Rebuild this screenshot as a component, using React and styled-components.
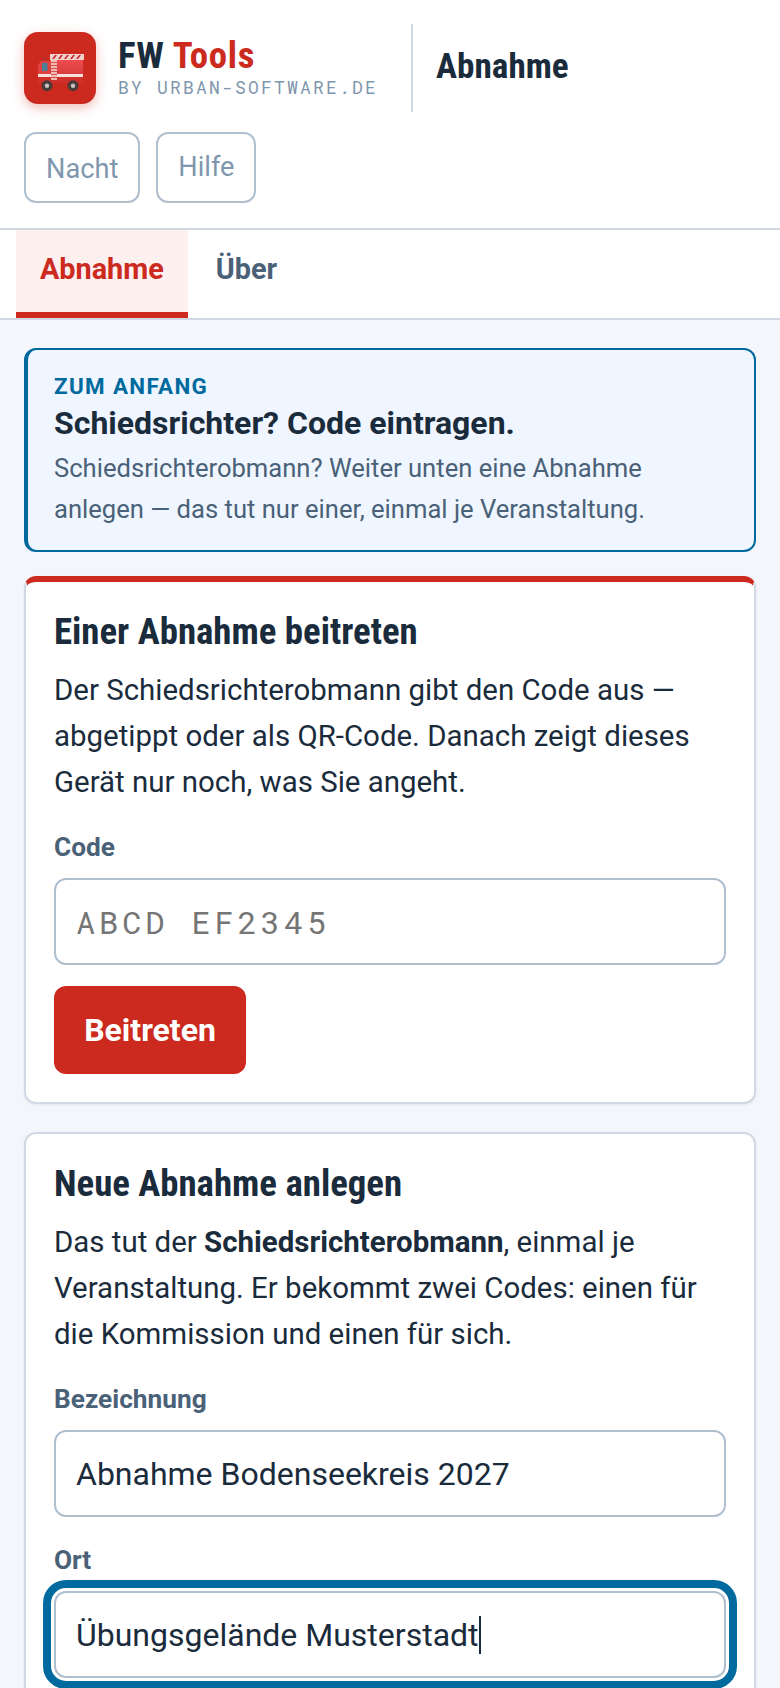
import React from "react";
import styled, { createGlobalStyle } from "styled-components";

const Global = createGlobalStyle`
  * { box-sizing: border-box; }
  html, body { margin: 0; padding: 0; background: #f4f6fb; }
  body { font-family: Roboto, "Liberation Sans", sans-serif; color: #1a2b3c; overflow: hidden; height: 1688px; }
`;
const Page = styled.div`width: 780px; height: 1688px; overflow: hidden;`;
const Header = styled.header`
  background: #fff; border-bottom: 2px solid #d2d9e3; padding: 24px 24px 0; height: 230px;
  display: flex; flex-direction: column; gap: 20px;
`;
const BrandRow = styled.div`display: flex; align-items: center; height: 88px;`;
const LogoBox = styled.div`
  width: 72px; height: 72px; border-radius: 14px; background: #cc2a1e; flex: none;
  box-shadow: 0 4px 12px rgba(204,42,30,.3); display: flex;
`;
const Brand = styled.div`margin-left: 22px; display: flex; flex-direction: column; padding: 0 33px 3px 0; border-right: 2px solid #d2d9e3; height: 88px; justify-content: center;`;
const BrandTitle = styled.div`font-family: "Roboto Condensed", Roboto, sans-serif; font-stretch: condensed; font-weight: 700; font-size: 36.8px; line-height: 40px; letter-spacing: .74px; color: #1a2b3c; span { color: #cc2a1e; }`;
const BrandSub = styled.div`font-family: "Roboto Mono", "DejaVu Sans Mono", monospace; font-size: 18px; line-height: 22px; letter-spacing: 2.2px; color: #7f97ae;`;
const PageTitle = styled.div`margin: 0 0 4px 23px; font-family: "Roboto Condensed", Roboto, sans-serif; font-stretch: condensed; font-weight: 700; font-size: 35.2px; color: #1a2b3c;`;
const ToolRow = styled.div`display: flex; gap: 16px;`;
const ToolButton = styled.div`
  height: 71px; padding: ${p => p.$up ? "0 20px 1px" : "2px 20px 0"}; border: 2px solid #b0bfce; border-radius: 12px; color: #7f97ae; font-size: 27.2px;
  display: flex; align-items: center; background: #fff;
`;
const Tabs = styled.nav`background: #fff; border-bottom: 2px solid #d2d9e3; height: 90px; padding: 0 16px; display: flex; gap: 4px;`;
const Tab = styled.div`
  padding: 0 24px 4px; height: 88px; display: flex; align-items: center; font-weight: 700; font-size: 28.8px;
  color: ${p => p.$active ? "#cc2a1e" : "#4a6178"};
  background: ${p => p.$active ? "#fdf0ef" : "transparent"};
  border-bottom: 6px solid ${p => p.$active ? "#cc2a1e" : "transparent"};
`;
const Main = styled.main`padding: 28px 24px 0;`;
const Callout = styled.section`
  background: #eff6ff; border: 2px solid #006a9e; border-left-width: 4px; border-radius: 12px; padding: 23px 26px 0; height: 204px; margin-bottom: 24px;
`;
const Eyebrow = styled.div`font-weight: 700; font-size: 22.4px; line-height: 26px; letter-spacing: 1.34px; color: #006a9e;`;
const CalloutTitle = styled.div`margin-top: 4px; font-weight: 700; font-size: 32px; line-height: 40px; color: #1a2b3c;`;
const CalloutText = styled.p`margin: 5px 0 0; font-size: 25.6px; line-height: 40.7px; color: #4a6178;`;
const Card = styled.section`
  background: #fff; border: 2px solid #d2d9e3; ${p => p.$accent ? "border-top: 6px solid #cc2a1e;" : ""} border-radius: 12px;
  padding: 28px 28px 28px; margin-bottom: 28px; box-shadow: 0 1px 3px rgba(26,43,60,.08);
`;
const CardTitle = styled.h2`margin: 0; font-family: "Roboto Condensed", Roboto, sans-serif; font-stretch: condensed; font-weight: 700; font-size: 36.8px; line-height: 44px; color: #1a2b3c;`;
const CardText = styled.p`margin: 13px 0 0; font-size: 29.44px; line-height: 46px; color: #1a2b3c; b { font-weight: 700; }`;
const Label = styled.div`margin-top: ${p => p.$mt}px; font-weight: 700; font-size: 26.24px; line-height: 32px; color: #4a6178;`;
const Field = styled.div`
  margin-top: 15px; height: 87px; border: 2px solid #b0bfce; border-radius: 12px; background: #fff; padding: 0 20px;
  display: flex; align-items: center; font-size: 32px; color: #1a2b3c;
  ${p => p.$focus ? "outline: 8px solid #006a9e; outline-offset: 3px;" : ""}
`;
const CodePlaceholder = styled.span`font-family: "Roboto Mono", "DejaVu Sans Mono", monospace; letter-spacing: 3.9px; color: #757575;`;
const Caret = styled.span`display: inline-block; width: 2px; height: 38px; background: #1a2b3c;`;
const Submit = styled.div`
  margin-top: 21px; width: 192px; height: 88px; border-radius: 12px; background: #cc2a1e; color: #fff; font-weight: 700; font-size: 32px;
  display: flex; align-items: center; justify-content: center;
`;

const Truck = () => (
  <svg width="72" height="72" viewBox="0 0 72 72">
    <defs>
      <linearGradient id="body" x1="0" y1="0" x2="0" y2="1">
        <stop offset="0" stopColor="#ef4c50" /><stop offset="1" stopColor="#d93c3c" />
      </linearGradient>
    </defs>
    <rect x="19" y="25" width="3" height="4" fill="#b5302f" />
    <path d="M17 29h9v22H14V33z" fill="#e0423f" />
    <rect x="18" y="31" width="5.5" height="8" fill="#4d7f96" />
    <rect x="26" y="28" width="33" height="14" fill="url(#body)" />
    <rect x="14" y="45" width="45" height="6" fill="#d0302a" />
    <rect x="14" y="42" width="45" height="3" fill="#f8e0dc" />
    <rect x="26" y="22" width="34" height="6" fill="#f2d0cc" />
    {[28, 34, 40, 46, 52].map(x => <path key={x} d={`M${x} 27l3-4h2l-3 4z`} fill="#c8282a" />)}
    <rect x="27" y="28" width="6" height="20" fill="#f0b9b4" />
    {[30, 33, 36, 39, 42, 45].map(y => <rect key={y} x="27" y={y} width="6" height="1" fill="#d9534c" />)}
    {[23, 49].map(x => (
      <g key={x}><circle cx={x} cy="53.7" r="5.5" fill="#4a3b38" /><circle cx={x} cy="53.7" r="2.2" fill="#c9c4bf" /></g>
    ))}
  </svg>
);

export default function App() {
  return (
    <Page>
      <Global />
      <Header>
        <BrandRow>
          <LogoBox><Truck /></LogoBox>
          <Brand>
            <BrandTitle>FW <span>Tools</span></BrandTitle>
            <BrandSub>BY URBAN-SOFTWARE.DE</BrandSub>
          </Brand>
          <PageTitle>Abnahme</PageTitle>
        </BrandRow>
        <ToolRow>
          <ToolButton>Nacht</ToolButton>
          <ToolButton $up>Hilfe</ToolButton>
        </ToolRow>
      </Header>
      <Tabs>
        <Tab $active>Abnahme</Tab>
        <Tab>Über</Tab>
      </Tabs>
      <Main>
        <Callout>
          <Eyebrow>ZUM ANFANG</Eyebrow>
          <CalloutTitle>Schiedsrichter? Code eintragen.</CalloutTitle>
          <CalloutText>Schiedsrichterobmann? Weiter unten eine Abnahme anlegen — das tut nur einer, einmal je Veranstaltung.</CalloutText>
        </Callout>
        <Card $accent>
          <CardTitle>Einer Abnahme beitreten</CardTitle>
          <CardText>Der Schiedsrichterobmann gibt den Code aus — abgetippt oder als QR-Code. Danach zeigt dieses Gerät nur noch, was Sie angeht.</CardText>
          <Label $mt={26}>Code</Label>
          <Field><CodePlaceholder>ABCD EF2345</CodePlaceholder></Field>
          <Submit>Beitreten</Submit>
        </Card>
        <Card>
          <CardTitle>Neue Abnahme anlegen</CardTitle>
          <CardText>Das tut der <b>Schiedsrichterobmann</b>, einmal je Veranstaltung. Er bekommt zwei Codes: einen für die Kommission und einen für sich.</CardText>
          <Label $mt={26}>Bezeichnung</Label>
          <Field>Abnahme Bodenseekreis 2027</Field>
          <Label $mt={27}>Ort</Label>
          <Field $focus>Übungsgelände Musterstadt<Caret /></Field>
        </Card>
      </Main>
    </Page>
  );
}
